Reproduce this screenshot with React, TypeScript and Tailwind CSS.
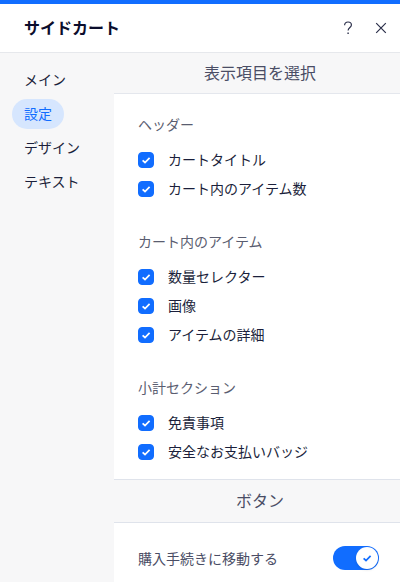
import { useState } from "react";

const TABS = ["メイン", "設定", "デザイン", "テキスト"];

const GROUPS = [
  { title: "ヘッダー", items: ["カートタイトル", "カート内のアイテム数"] },
  { title: "カート内のアイテム", items: ["数量セレクター", "画像", "アイテムの詳細"] },
  { title: "小計セクション", items: ["免責事項", "安全なお支払いバッジ"] },
];

function CheckItem({ label }: { label: string }) {
  return (
    <label className="flex h-5 items-center gap-[14px] text-sm leading-5 text-[#1b1f3b]">
      <span className="relative size-4 shrink-0">
        <input
          type="checkbox"
          defaultChecked
          className="peer block size-4 appearance-none rounded-[4px] border border-[#116dff] bg-white checked:bg-[#116dff]"
        />
        <svg
          viewBox="0 0 16 16"
          fill="none"
          stroke="white"
          strokeWidth="1.7"
          className="pointer-events-none absolute inset-0 size-4 opacity-0 peer-checked:opacity-100"
        >
          <path d="M4.6 8.3 7 10.5l4.6-4.7" />
        </svg>
      </span>
      <span className="pb-0.5">{label}</span>
    </label>
  );
}

export default function App() {
  const [tab, setTab] = useState("設定");
  const [checkout, setCheckout] = useState(true);

  return (
    <div className="flex min-h-screen flex-col border-t-4 border-[#116dff] bg-white font-['Noto_Sans_CJK_JP',sans-serif]">
      {/* Panel header */}
      <header className="flex h-[49px] items-center justify-between border-b border-[#e6e8ec] pr-3 pl-6">
        <h1 className="pb-0.5 text-base leading-6 font-bold text-[#0b0d2c]">サイドカート</h1>
        <div className="flex items-center gap-[19px] text-[#2b2f4a]">
          <button type="button" aria-label="ヘルプ">
            <svg viewBox="0 0 14 14" fill="none" stroke="currentColor" strokeWidth="1.2" className="size-[14px]">
              <path d="M3.6 4.2C3.6 2.2 5 1 7 1s3.4 1.2 3.4 3c0 2.4-3.3 2.6-3.3 5.6" />
              <path d="M7.1 11.4v1.5" strokeWidth="1.4" />
            </svg>
          </button>
          <button type="button" aria-label="閉じる">
            <svg viewBox="0 0 14 14" fill="none" stroke="currentColor" strokeWidth="1.2" className="size-[14px]">
              <path d="m2.2 2.2 9.6 9.6m0-9.6-9.6 9.6" />
            </svg>
          </button>
        </div>
      </header>

      <div className="flex flex-1">
        {/* Side tabs */}
        <nav className="flex w-[114px] shrink-0 flex-col items-start gap-1 bg-[#f7f7f8] pt-3 pl-3">
          {TABS.map((name) => (
            <button
              key={name}
              type="button"
              onClick={() => setTab(name)}
              className={
                name === tab
                  ? "h-[30px] rounded-full bg-[#d6e6fe] px-3 pb-0.5 text-sm leading-5 text-[#116dff]"
                  : "h-[30px] rounded-full px-3 pb-0.5 text-sm leading-5 text-[#1b1f3b]"
              }
            >
              {name}
            </button>
          ))}
        </nav>

        <main className="min-w-0 flex-1">
          <h2 className="border-b border-[#e4e7ed] bg-[#f7f7f8] pt-[7px] pr-[22px] pb-[9px] pl-7 text-center text-base leading-6 text-[#4a4d65]">
            表示項目を選択
          </h2>

          <div className="flex flex-col gap-8 px-6 pt-5 pb-[17px]">
            {GROUPS.map((group) => (
              <fieldset key={group.title}>
                <legend className="text-sm leading-5 text-[#5a5d70]">{group.title}</legend>
                <div className="flex flex-col gap-[9px] pt-4">
                  {group.items.map((item) => (
                    <CheckItem key={item} label={item} />
                  ))}
                </div>
              </fieldset>
            ))}
          </div>

          <h2 className="border-y border-[#dfe3eb] bg-[#f7f7f8] pt-2 pr-[22px] pb-[10px] pl-7 text-center text-base leading-6 text-[#4a4d65]">
            ボタン
          </h2>

          <label className="flex items-center justify-between pt-[23px] pr-[21px] pl-6 text-sm leading-5 text-[#4a4d65]">
            購入手続きに移動する
            <span className="relative h-6 w-[46px] shrink-0">
              <input
                type="checkbox"
                role="switch"
                checked={checkout}
                onChange={(e) => setCheckout(e.target.checked)}
                className="peer block h-6 w-[46px] appearance-none rounded-full bg-[#b6c1cd] checked:bg-[#116dff]"
              />
              <span className="pointer-events-none absolute top-px left-px flex size-[22px] items-center justify-center rounded-full bg-white text-[#116dff] shadow-sm peer-checked:left-[23px]">
                {checkout && (
                  <svg viewBox="0 0 16 16" fill="none" stroke="currentColor" strokeWidth="1.7" className="size-4">
                    <path d="M4.6 8.3 7 10.5l4.6-4.7" />
                  </svg>
                )}
              </span>
            </span>
          </label>
        </main>
      </div>
    </div>
  );
}
